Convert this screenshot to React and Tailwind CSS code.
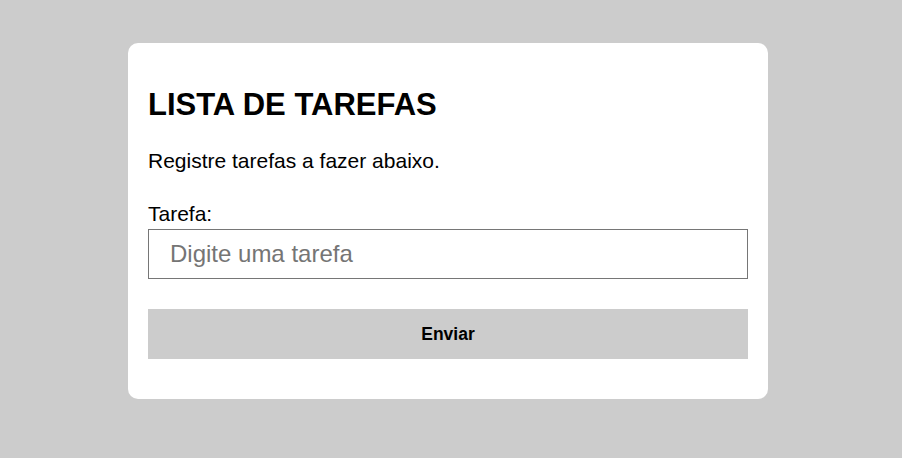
export default function App() {
  return (
    <div className="min-h-screen w-full bg-[#cccccc] pt-[43px]" style={{ fontFamily: '"Liberation Sans", Arial, sans-serif' }}>
      <div className="ml-[128px] w-[640px] rounded-[10px] bg-white px-5 pt-5 pb-10">
        <h1 className="mt-[24px] text-[31px] leading-[36px] font-bold text-black">LISTA DE TAREFAS</h1>
        <p className="mt-[26px] text-[21px] leading-[24px] text-black">Registre tarefas a fazer abaixo.</p>
        <label htmlFor="tarefa" className="mt-[29px] block text-[21px] leading-[24px] text-black">Tarefa:</label>
        <input
          id="tarefa"
          type="text"
          placeholder="Digite uma tarefa"
          className="mt-[3px] block h-[50px] w-full border border-[#767676] bg-white pl-[21px] text-[24px] text-black placeholder:text-[#757575] outline-none"
        />
        <button className="mt-[30px] block h-[50px] w-full bg-[#cccccc] text-[17.5px] font-bold text-black">Enviar</button>
      </div>
    </div>
  );
}
